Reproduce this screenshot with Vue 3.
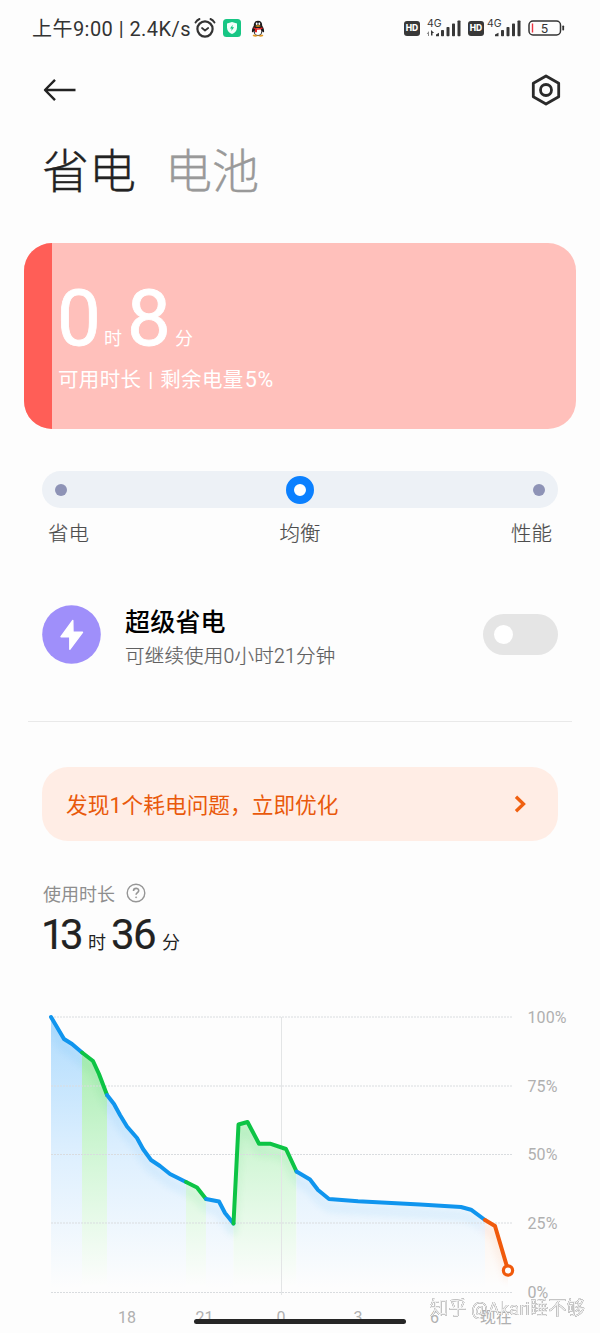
<script setup>
const signals = [
  { id: 'a', data: true },
  { id: 'b', data: false },
]
const grid = [
  { y: 17, label: '100%' },
  { y: 86, label: '75%' },
  { y: 154.5, label: '50%' },
  { y: 223, label: '25%' },
  { y: 292.5, label: '0%' },
]
const hours = [
  { x: 127, label: '18' },
  { x: 204.5, label: '21' },
  { x: 281, label: '0' },
  { x: 358, label: '3' },
  { x: 434.5, label: '6' },
  { x: 496, label: '现在' },
]
const segments = [
  { kind: 'blue', pts: [[51, 17], [64, 39], [72, 44], [82, 52.5]] },
  { kind: 'green', pts: [[82, 52.5], [93, 61], [99, 74], [107, 95]] },
  { kind: 'blue', pts: [[107, 95], [114, 104], [120, 115], [127, 126.5], [137, 138], [143, 149], [151, 160], [160, 166], [170, 174], [186, 182]] },
  { kind: 'green', pts: [[186, 182], [197, 187.5], [206, 199]] },
  { kind: 'blue', pts: [[206, 199], [219, 201.5], [225, 213], [233.5, 223.5]] },
  { kind: 'green', pts: [[233.5, 223.5], [238.5, 124.5], [247.5, 122], [259, 143.7], [270, 143.7], [286, 149], [296.5, 171.5]] },
  { kind: 'blue', pts: [[296.5, 171.5], [310, 179.5], [318, 190], [329, 199], [358, 201.3], [420, 204.5], [461, 207], [471, 209.7], [485, 220]] },
  { kind: 'orange', pts: [[485, 220], [495, 226], [508, 270]] },
]
const line = (s) => s.pts.map((p) => p.join(',')).join(' ')
const area = (s) => `${s.pts[0][0]},292 ${line(s)} ${s.pts[s.pts.length - 1][0]},292`
</script>

<template>
  <main class="screen">
    <header class="status">
      <span class="clock">上午9:00 | 2.4K/s</span>
      <svg class="alarm" width="22" height="22" viewBox="0 0 22 22" fill="none" stroke="#333" stroke-linecap="round">
        <circle cx="11" cy="12" r="7.600" stroke-width="2.200" />
        <path d="M8 11l3 2.500 3.200-2.500" stroke-width="1.700" stroke-linejoin="round" />
        <path d="M1.500 5.500Q3 3 5.500 2M20.500 5.500Q19 3 16.500 2" stroke-width="1.900" />
      </svg>
      <svg class="shield" width="18" height="18" viewBox="0 0 18 18">
        <rect width="18" height="18" rx="3.500" fill="#17c684" />
        <path d="M9 3l5 1.600v4.200c0 3-2 5-5 6.200-3-1.200-5-3.200-5-6.200V4.600z" fill="#f2fffa" />
        <path d="M9.700 5.800L7 9.400h1.700L8.300 12l2.800-3.700H9.300z" fill="#17c684" />
      </svg>
      <svg class="qq" width="14" height="17" viewBox="0 0 14 17">
        <ellipse cx="4.300" cy="15.600" rx="2.700" ry="1.100" fill="#e39a24" />
        <ellipse cx="9.700" cy="15.600" rx="2.700" ry="1.100" fill="#e39a24" />
        <path d="M7 .8c3 0 4.300 2 4.200 5 1 1.300 2.300 4.200 1.800 6.200-.5.600-1.200-.3-1.500-.8-.4 2.800-2 4.300-4.500 4.300S2.900 14 2.500 11.200c-.3.500-1 1.400-1.500.8C.500 10 1.800 7.100 2.800 5.800 2.700 2.800 4 .8 7 .8z" fill="#1c1a1c" />
        <ellipse cx="7" cy="11.600" rx="3.300" ry="3.500" fill="#fff" />
        <ellipse cx="5.700" cy="3.700" rx=".9" ry="1.200" fill="#fff" />
        <ellipse cx="8.300" cy="3.700" rx=".9" ry="1.200" fill="#fff" />
        <ellipse cx="7" cy="6" rx="2.700" ry=".8" fill="#f2a51f" />
        <path d="M2.600 7.200Q7 9.300 11.400 7.200l.2 1.600Q8.500 10 6 9.700v2.600H4V9.300L2.400 8.600z" fill="#e52325" />
      </svg>
      <span class="spacer"></span>
      <template v-for="s in signals" :key="s.id">
        <span class="hd">HD</span>
        <svg :class="['signal', s.id]" width="36" height="20" viewBox="0 0 36 20" fill="#383838">
          <text x="1" y="8.800" class="net">4G</text>
          <template v-if="s.data">
            <path d="M3 13v5H2v-2H.7z" fill="#888" />
            <path d="M5 17.500V12l3.200 3H6.500v2.500z" />
            <path d="M10 18.200v-1.700l3-1.800v3.500z" />
          </template>
          <path v-else d="M9 18.200v-1.700l3.500-1.800v3.500z" />
          <rect x="15" y="12" width="3" height="6.200" rx=".7" />
          <rect x="20.500" y="9" width="3" height="9.200" rx=".7" />
          <rect x="26" y="5.500" width="3" height="12.700" rx=".7" />
          <rect x="31.500" y="2.500" width="3" height="15.700" rx=".7" />
        </svg>
      </template>
      <svg class="battery" width="37" height="16" viewBox="0 0 37 16">
        <rect x="1" y="1" width="31.500" height="14" rx="4" fill="none" stroke="#333" stroke-width="1.500" />
        <rect x="34.300" y="5.500" width="1.800" height="5" rx=".8" fill="#333" />
        <rect x="3.800" y="3.500" width="1.400" height="9" fill="#ec3340" />
        <text x="16.500" y="12.500" class="charge">5</text>
      </svg>
    </header>

    <nav class="nav">
      <svg width="34" height="24" viewBox="0 0 34 24" fill="none" stroke="#222" stroke-width="2.400">
        <path d="M2 12h30.500M12 1.800L2 12l10 10.200" stroke-linejoin="round" />
      </svg>
      <svg width="30" height="32" viewBox="0 0 30 32" fill="none" stroke="#2a2a2a" stroke-width="2.800">
        <path d="M15 2l12.700 7.200v13.600L15 30 2.300 22.800V9.200z" stroke-linejoin="round" />
        <circle cx="15" cy="16" r="5.500" />
      </svg>
    </nav>

    <div class="tabs">
      <h1>省电</h1>
      <h1 class="inactive">电池</h1>
    </div>

    <section class="remaining">
      <div class="level"></div>
      <div class="remaining-text">
        <div class="big"><b>0</b><i>时</i><b>8</b><i>分</i></div>
        <p>可用时长 | 剩余电量<span class="percent">5%</span></p>
      </div>
    </section>

    <section class="modes">
      <div class="track"><span class="dot"></span><span class="knob"></span><span class="dot"></span></div>
      <div class="mode-names"><span>省电</span><span>均衡</span><span>性能</span></div>
    </section>

    <section class="ultra">
      <svg width="59" height="59" viewBox="0 0 59 59">
        <circle cx="29.500" cy="29.500" r="29.300" fill="#9f8ffa" />
        <path d="M30.800 15.500L19 31.700h8.800v12.600L40.500 27.300H31z" fill="#fff" stroke="#fff" stroke-width="1.400" stroke-linejoin="round" />
      </svg>
      <div class="ultra-text">
        <h2>超级省电</h2>
        <p>可继续使用0小时21分钟</p>
      </div>
      <div class="switch"><span></span></div>
    </section>

    <hr />

    <section class="banner">
      <span>发现1个耗电问题，立即优化</span>
      <svg width="13" height="18" viewBox="0 0 13 18" fill="none" stroke="#f06010" stroke-width="3.300">
        <path d="M2 1.800L9.500 9 2 16.200" />
      </svg>
    </section>

    <section class="usage">
      <div class="usage-title">
        <span>使用时长</span>
        <svg width="20" height="20" viewBox="0 0 20 20" fill="none" stroke="#969696" stroke-width="1.400">
          <circle cx="10" cy="10" r="8.800" />
          <path d="M7.500 8c0-3.500 5.200-3.300 5.200-.3 0 1.800-2.600 2-2.600 4" stroke-width="1.600" />
          <circle cx="10.100" cy="14.300" r=".6" fill="#969696" stroke-width=".6" />
        </svg>
      </div>
      <div class="usage-value"><b>13</b><i>时</i><b>36</b><i>分</i></div>
    </section>

    <svg class="chart" width="600" height="333" viewBox="0 0 600 333">
      <defs>
        <linearGradient id="fill-blue" gradientUnits="userSpaceOnUse" x1="0" y1="17" x2="0" y2="288">
          <stop offset="0" stop-color="#b0dcfd" />
          <stop offset=".5" stop-color="#ddeffe" />
          <stop offset="1" stop-color="#fdfdfd" />
        </linearGradient>
        <linearGradient id="fill-green" gradientUnits="userSpaceOnUse" x1="0" y1="50" x2="0" y2="286">
          <stop offset="0" stop-color="#a9edb2" />
          <stop offset=".5" stop-color="#d6f7da" />
          <stop offset="1" stop-color="#fdfdfd" />
        </linearGradient>
        <linearGradient id="fill-orange" gradientUnits="userSpaceOnUse" x1="0" y1="220" x2="0" y2="285">
          <stop offset="0" stop-color="#fdf4ed" />
          <stop offset="1" stop-color="#fdfdfd" />
        </linearGradient>
        <filter id="soft" x="-20%" y="-20%" width="140%" height="150%"><feGaussianBlur stdDeviation="4" /></filter>
        <clipPath id="under"><polygon v-for="(s, i) in segments" :key="i" :points="area(s)" /></clipPath>
      </defs>
      <polygon v-for="(s, i) in segments" :key="'f' + i" :points="area(s)" :fill="`url(#fill-${s.kind})`" />
      <g clip-path="url(#under)">
        <g filter="url(#soft)" transform="translate(0 9)" opacity=".15">
          <polyline v-for="(s, i) in segments" :key="'s' + i" :points="line(s)" :class="['curve', s.kind]" />
        </g>
      </g>
      <g class="grid">
        <line v-for="g in grid" :key="g.y" x1="51" x2="512" :y1="g.y" :y2="g.y" />
        <line class="midnight" x1="281.500" x2="281.500" y1="17" y2="295" />
      </g>
      <polyline v-for="(s, i) in segments" :key="'l' + i" :points="line(s)" :class="['curve', s.kind]" />
      <circle cx="508" cy="270.500" r="4.600" fill="#fff" stroke="#f05a0c" stroke-width="3.200" />
      <text v-for="g in grid" :key="g.label" class="axis" x="527.500" :y="g.y + 5.5">{{ g.label }}</text>
      <text v-for="h in hours" :key="h.label" class="axis hour" :x="h.x" y="322.500">{{ h.label }}</text>
      <rect x="194" y="319" width="212" height="5" rx="2.500" fill="#262626" />
      <text class="watermark" x="430" y="315" textLength="155" lengthAdjust="spacingAndGlyphs">知乎 @Akari睡不够</text>
    </svg>
  </main>
</template>

<style>
body { margin: 0; background: #fdfdfd; }
</style>

<style scoped>
.screen {
  width: 600px;
  height: 1333px;
  overflow: hidden;
  background: #fdfdfd;
  color: #222;
  font-family: Roboto, "Noto Sans CJK SC", sans-serif;
}
h1, h2, p, hr { margin: 0; }
b, i { font-style: normal; font-weight: 400; }
svg { display: block; flex: none; }
.status {
  box-sizing: border-box;
  height: 56px;
  padding: 0 35px 0 32px;
  display: flex;
  align-items: center;
  color: #333;
}
.clock { width: 161px; padding-bottom: 2px; font-size: 20px; letter-spacing: .45px; white-space: nowrap; }
.alarm { margin-left: 1px; }
.shield { margin-left: 7px; }
.qq { margin-left: 10px; }
.spacer { flex: 1; }
.hd {
  width: 16px;
  height: 15px;
  border-radius: 3px;
  background: #383838;
  color: #fff;
  font: 800 8.500px/15px Inter, sans-serif;
  text-align: center;
}
.signal { margin: 0 6px; }
.signal.b { margin: 0 6px 0 2px; }
.net { font: 10.500px Inter, sans-serif; }
.charge { font: 400 13px Roboto, sans-serif; text-anchor: middle; fill: #333; }
.nav {
  height: 67px;
  padding: 0 39px 0 43px;
  display: flex;
  align-items: center;
  justify-content: space-between;
}
.tabs {
  height: 118px;
  padding: 2px 0 0 42px;
  display: flex;
  gap: 29px;
}
h1 { font-size: 47px; line-height: 94px; font-weight: 300; -webkit-text-stroke: .35px currentColor; }
.inactive { color: #999; }
.remaining {
  height: 186px;
  margin: 0 24px;
  display: flex;
  border-radius: 28px;
  overflow: hidden;
  background: #ffc0bb;
  color: #fff;
}
.level { width: 28px; background: #ff5e57; }
.remaining-text { padding: 37px 0 0 6px; }
.big { height: 78px; display: flex; align-items: baseline; line-height: 78px; }
.big b { width: 47px; font-size: 78px; text-indent: -1px; -webkit-text-stroke: .8px #fff; }
.big b:first-child { width: 46px; text-indent: -1px; }
.big i { width: 24px; font-size: 18px; }
.remaining-text p { margin-top: 7px; font-size: 20.500px; line-height: 30px; letter-spacing: .35px; word-spacing: 1.300px; white-space: nowrap; }
.percent { font-size: 21.500px; letter-spacing: .8px; margin-left: 1px; line-height: 1; }
.modes { margin: 41px 42px 0; }
.modes, .ultra { position: static; }
.track {
  height: 37px;
  margin-top: 42px;
  padding: 0 13px;
  display: flex;
  align-items: center;
  justify-content: space-between;
  border-radius: 19px;
  background: #edf1f6;
}
.modes { margin-top: 0; }
.dot { width: 12px; height: 12px; border-radius: 50%; background: #8e93b6; }
.knob { box-sizing: border-box; width: 28px; height: 28px; border: 8px solid #0b80ff; border-radius: 50%; background: #fff; }
.mode-names {
  padding: 11px 6px 0;
  display: flex;
  justify-content: space-between;
  font-size: 20.500px;
  line-height: 30px;
  font-weight: 300;
  color: #4d4d4d;
  -webkit-text-stroke: .2px currentColor;
}
.ultra { height: 59px; margin: 56px 42px 0; display: flex; align-items: center; }
.ultra-text { flex: 1; padding: 9px 0 0 24px; }
h2 { font-size: 25px; line-height: 35px; font-weight: 500; letter-spacing: .2px; color: #000; }
.ultra-text p { font-size: 19.500px; line-height: 33px; font-weight: 300; letter-spacing: .2px; color: #606060; -webkit-text-stroke: .2px currentColor; }
.switch { width: 75px; height: 41px; border-radius: 21px; background: #e5e5e5; display: flex; align-items: center; }
.switch span { width: 19px; height: 19px; margin-left: 11px; border-radius: 50%; background: #fff; }
hr { height: 1px; margin: 57px 28px 0; border: 0; background: #e9e9e9; }
.banner {
  height: 74px;
  margin: 45px 42px 0;
  padding: 0 31px 0 24px;
  box-sizing: border-box;
  display: flex;
  align-items: center;
  justify-content: space-between;
  border-radius: 26px;
  background: #ffede5;
  color: #e9590b;
  font-size: 21.700px;
}
.banner span { padding-bottom: 2px; }
.usage { height: 159px; padding: 38px 43px 0; box-sizing: border-box; }
.usage-title { height: 28px; display: flex; align-items: center; gap: 11px; font-size: 18px; color: #8e8e8e; }
.usage-title span { padding-bottom: 1px; }
.usage-value { display: flex; align-items: baseline; line-height: 56px; }
.usage-value b { width: 45px; font-size: 42px; letter-spacing: -4.500px; text-indent: -2px; -webkit-text-stroke: .2px currentColor; }
.usage-value b:nth-child(3) { width: 50px; letter-spacing: -1.500px; text-indent: -1px; }
.usage-value i { width: 24px; font-size: 18px; }
.grid line { stroke: #d9dcdf; stroke-width: 1; stroke-dasharray: 2 1; }
.grid .midnight { stroke: #e3e5e6; stroke-dasharray: none; }
.curve { fill: none; stroke-width: 4; stroke-linecap: round; stroke-linejoin: round; }
.curve.blue { stroke: #1095ee; }
.curve.green { stroke: #0dc445; }
.curve.orange { stroke: #f05a0c; }
.axis { font-size: 16px; font-weight: 400; letter-spacing: .1px; fill: #b0b0b0; }
.hour { text-anchor: middle; }
.watermark { font-size: 19px; fill: #fff; fill-opacity: .9; filter: drop-shadow(.6px .6px .6px #666) drop-shadow(0 0 .6px #999); }
</style>
